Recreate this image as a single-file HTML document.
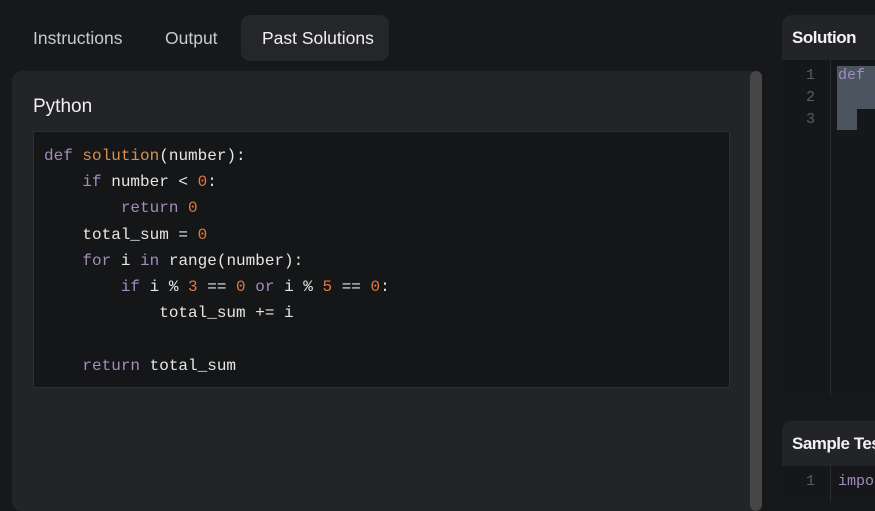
<!DOCTYPE html>
<html><head><style>
body{margin:0;width:875px;height:497px;overflow:hidden;background:#17181b;font-family:"Liberation Sans",sans-serif;position:relative}
.t{position:absolute;font-size:17.5px;color:#c9cbd0;top:28px}
.pill{position:absolute;left:241px;top:15px;width:148px;height:46px;background:#25262a;border-radius:9px}
.panel{position:absolute;left:12px;top:71px;width:750px;height:440px;background:#232428;border-radius:10px}
.sb{position:absolute;left:750px;top:71px;width:12px;height:440px;background:#464646;border-radius:6px}
.code{position:absolute;left:33px;top:131px;width:695px;height:255px;background:#151617;border:1px solid #2e2f31}
pre{margin:0;position:absolute;left:10px;top:11px;font-family:"Liberation Mono",monospace;font-size:16px;line-height:26.2px;color:#e6e6e6}
.k{color:#a48bc0}.f{color:#d98f52}.n{color:#e07a3e}
.rp{position:absolute;left:782px;width:100px;background:#161718;border-radius:10px 0 0 0;overflow:hidden}
.hd{height:45px;background:#232428;color:#f2f2f2;font-weight:bold;font-size:17px;line-height:45px;padding-left:10px;letter-spacing:-0.5px;white-space:nowrap}
.gut{position:absolute;left:0;top:45px;width:48px;bottom:0;border-right:1px solid #2a2b2d}
.ln{position:absolute;left:0;width:33px;text-align:right;font-family:"Liberation Mono",monospace;font-size:15px;color:#5a5c5f}
</style></head><body>
<div class="pill"></div>
<div class="t" style="left:33px">Instructions</div>
<div class="t" style="left:165px">Output</div>
<div class="t" style="left:262px;color:#f0f0f0">Past Solutions</div>
<div class="panel"></div><div class="sb"></div>
<div style="position:absolute;left:33px;top:96px;font-size:19px;color:#f0f0f0">Python</div>
<div class="code"><pre><span class="k">def</span> <span class="f">solution</span>(number):
    <span class="k">if</span> number &lt; <span class="n">0</span>:
        <span class="k">return</span> <span class="n">0</span>
    total_sum = <span class="n">0</span>
    <span class="k">for</span> i <span class="k">in</span> range(number):
        <span class="k">if</span> i % <span class="n">3</span> == <span class="n">0</span> <span class="k">or</span> i % <span class="n">5</span> == <span class="n">0</span>:
            total_sum += i

    <span class="k">return</span> total_sum</pre></div>
<div class="rp" style="top:15px;height:380px"><div class="hd">Solution</div><div class="gut"></div>
<div style="position:absolute;left:55px;top:51px;width:60px;height:43px;background:#4a5560"></div>
<div style="position:absolute;left:55px;top:94px;width:20px;height:21px;background:#4a5560"></div>
<div class="ln" style="top:52px">1</div><div class="ln" style="top:74px">2</div><div class="ln" style="top:96px">3</div>
<div style="position:absolute;left:56px;top:52px;font-family:'Liberation Mono',monospace;font-size:15px;color:#a48bc0">def</div>
</div>
<div class="rp" style="top:421px;height:80px"><div class="hd">Sample Tests</div><div class="gut"></div>
<div class="ln" style="top:52px">1</div>
<div style="position:absolute;left:56px;top:52px;font-family:'Liberation Mono',monospace;font-size:15px;color:#a48bc0">import</div>
</div>
</body></html>
